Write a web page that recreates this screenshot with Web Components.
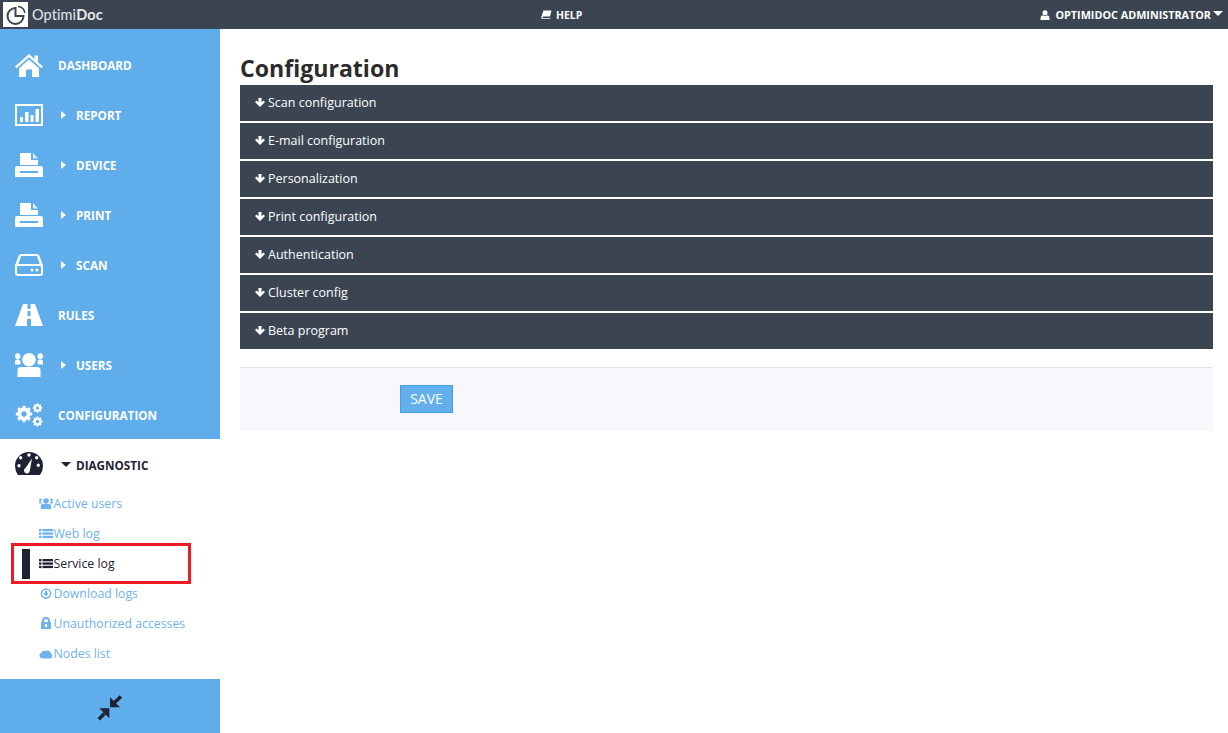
<!DOCTYPE html>
<html>
<head>
<meta charset="utf-8">
<title>OptimiDoc</title>
<style>
  html, body { margin: 0; height: 100%; background: #fff; overflow: hidden; }
  body { font-family: "Open Sans", "Noto Sans", sans-serif; }
</style>
</head>
<body>
<opti-app>
  <opti-topbar slot="top"></opti-topbar>
  <opti-sidebar slot="side">
    <nav-item icon="home" label="DASHBOARD"></nav-item>
    <nav-item icon="report" label="REPORT" arrow="right"></nav-item>
    <nav-item icon="print" label="DEVICE" arrow="right"></nav-item>
    <nav-item icon="print" label="PRINT" arrow="right"></nav-item>
    <nav-item icon="scan" label="SCAN" arrow="right"></nav-item>
    <nav-item icon="road" label="RULES"></nav-item>
    <nav-item icon="users" label="USERS" arrow="right"></nav-item>
    <nav-item icon="cogs" label="CONFIGURATION"></nav-item>
    <nav-item slot="open" icon="gauge" label="DIAGNOSTIC" arrow="down" active></nav-item>
    <sub-item slot="open" icon="group">Active users</sub-item>
    <sub-item slot="open" icon="list">Web log</sub-item>
    <sub-item slot="open" icon="list" current>Service log</sub-item>
    <sub-item slot="open" icon="download">Download logs</sub-item>
    <sub-item slot="open" icon="lock">Unauthorized accesses</sub-item>
    <sub-item slot="open" icon="cloud">Nodes list</sub-item>
  </opti-sidebar>
  <config-page slot="main" heading="Configuration">
    <config-row>Scan configuration</config-row>
    <config-row>E-mail configuration</config-row>
    <config-row>Personalization</config-row>
    <config-row>Print configuration</config-row>
    <config-row>Authentication</config-row>
    <config-row>Cluster config</config-row>
    <config-row>Beta program</config-row>
  </config-page>
</opti-app>

<script>
// shared icons, all on a 24 box unless the markup says otherwise
const gear = (cx, cy, r) => {
  let teeth = '';
  for (let a = 0; a < 180; a += 45) {
    teeth += `<rect x="${cx - r * 0.24}" y="${cy - r * 1.28}" width="${r * 0.48}" height="${r * 2.56}" rx="${r * 0.08}" transform="rotate(${a} ${cx} ${cy})"/>`;
  }
  // the hole is painted in the bar colour since the teeth sit under the ring
  return `<g>${teeth}<circle cx="${cx}" cy="${cy}" r="${r}"/><circle cx="${cx}" cy="${cy}" r="${r * 0.42}" fill="#5fadea"/></g>`;
};

const ICONS = {
  home: `<svg viewBox="0 0 28 24" width="28" height="24"><path d="M14 1 L19.5 6 V2.5 H23 V9.2 L28 13.6 L26.4 15.2 L14 4.3 L1.6 15.2 L0 13.6Z"/><path d="M14 6.4 L24 15.2 V24 H17 V16.5 H11 V24 H4 V15.2Z"/></svg>`,
  report: `<svg viewBox="0 0 28 22" width="28" height="22"><path fill-rule="evenodd" d="M0 0H28V22H0ZM2 2V20H26V2Z"/><rect x="5" y="13" width="3" height="5"/><rect x="10" y="8" width="3.500" height="10"/><rect x="15.500" y="11" width="3" height="7"/><rect x="20.500" y="5" width="3.500" height="13"/></svg>`,
  print: `<svg viewBox="0 0 28 24" width="28" height="24"><path d="M5 0H16V7H23V12H5Z"/><path d="M18 0 L23 5.5 H18Z" opacity=".8"/><path fill-rule="evenodd" d="M2 13H26Q28 13 28 15V24H0V15Q0 13 2 13ZM5 18V20H23V18Z"/></svg>`,
  scan: `<svg viewBox="0 0 28 22" width="28" height="22"><path fill-rule="evenodd" d="M6 0H22Q23.5 0 24.5 2L27.5 10Q28 11 28 13V19Q28 22 25 22H3Q0 22 0 19V13Q0 11 .5 10L3.5 2Q4.500 0 6 0ZM6 2 L3.4 10H24.600L22 2ZM3 12Q2 12 2 13V19Q2 20 3 20H25Q26 20 26 19V13Q26 12 25 12Z"/><circle cx="17" cy="16" r="1.500"/><circle cx="22" cy="16" r="1.500"/></svg>`,
  road: `<svg viewBox="0 0 28 22" width="28" height="22"><path fill-rule="evenodd" d="M8 0H12.500V5H15.500V0H20L28 22H16V15H12V22H0ZM12.500 7V12H15.500V7Z"/></svg>`,
  users: `<svg viewBox="0 0 28 24" width="28" height="24"><circle cx="14" cy="6.800" r="6.800"/><path d="M2.500 24V17Q2.500 14 6 14H22Q25.500 14 25.500 17V24Z"/><ellipse cx="2.700" cy="3.200" rx="2.700" ry="3"/><ellipse cx="25.300" cy="3.200" rx="2.700" ry="3"/><path d="M0 11.500V8Q0 6.500 2.700 6.500Q5.400 6.500 5.400 8V11.500Z"/><path d="M22.600 11.500V8Q22.600 6.500 25.300 6.500Q28 6.500 28 8V11.500Z"/></svg>`,
  cogs: `<svg viewBox="0 0 28 24" width="28" height="24">${gear(9, 11, 6.4)}${gear(22.500, 5, 3.700)}${gear(22.500, 18.500, 3.900)}</svg>`,
  gauge: `<svg viewBox="0 0 28 23" width="28" height="23"><path fill-rule="evenodd" d="M14 0A14 14 0 0 1 28 14Q28 19 25 23H3Q0 19 0 14A14 14 0 0 1 14 0ZM14 1.300A1.700 1.700 0 1 0 14 4.700A1.700 1.700 0 1 0 14 1.300ZM5.700 4A1.700 1.700 0 1 0 5.700 7.400A1.700 1.700 0 1 0 5.700 4ZM21.700 4A1.700 1.700 0 1 0 21.700 7.400A1.700 1.700 0 1 0 21.700 4ZM4 12A1.700 1.700 0 1 0 4 15.400A1.700 1.700 0 1 0 4 12ZM23.300 11.500A1.700 1.700 0 1 0 23.300 14.900A1.700 1.700 0 1 0 23.300 11.500ZM17 6.500 L10.500 16A2.900 2.900 0 1 0 14.800 18.500Z"/></svg>`,
  group: `<svg viewBox="0 0 14 11" width="14" height="11"><circle cx="7" cy="3" r="2.800"/><path d="M1.800 11V7.500Q1.800 6 3.500 6H10.500Q12.200 6 12.200 7.500V11Z"/><ellipse cx="1.400" cy="2" rx="1.400" ry="1.600"/><ellipse cx="12.600" cy="2" rx="1.400" ry="1.600"/><path d="M0 5.500V4.500Q0 3.800 1.400 3.800Q2.800 3.800 2.800 4.500V5.500Z"/><path d="M11.200 5.500V4.500Q11.200 3.800 12.600 3.800Q14 3.800 14 4.500V5.500Z"/></svg>`,
  list: `<svg viewBox="0 0 14 11" width="14" height="11"><rect y="1" width="2.500" height="2.300"/><rect y="4.400" width="2.500" height="2.300"/><rect y="7.800" width="2.500" height="2.300"/><rect x="3.500" y="1" width="10.500" height="2.300"/><rect x="3.500" y="4.400" width="10.500" height="2.300"/><rect x="3.500" y="7.800" width="10.500" height="2.300"/></svg>`,
  download: `<svg viewBox="0 0 14 11" width="14" height="11"><path fill-rule="evenodd" d="M7 .200A5.300 5.300 0 1 1 7 10.800A5.300 5.300 0 1 1 7 .200ZM7 1.700A3.800 3.800 0 1 0 7 9.300A3.800 3.800 0 1 0 7 1.700ZM5.900 2.800H8.100V5.300H9.800L7 8.300L4.200 5.300H5.900Z"/></svg>`,
  lock: `<svg viewBox="0 0 14 12" width="14" height="12"><path fill-rule="evenodd" d="M3 5V3.800A4 3.800 0 0 1 11 3.800V5H12V12H2V5ZM5 5H9V3.800A2 1.900 0 0 0 5 3.800ZM6 7V10H8V7Z"/></svg>`,
  cloud: `<svg viewBox="0 0 14 11" width="14" height="11"><path d="M3.200 10.500A3 3 0 0 1 2.400 4.700A3.200 3.200 0 0 1 6.500 3A3.600 3.600 0 0 1 12 5.600A2.600 2.600 0 0 1 11.200 10.500Z"/></svg>`
};

class OptiApp extends HTMLElement {
  constructor() {
    super();
    this.attachShadow({ mode: 'open' });
    this.shadowRoot.innerHTML = `
      <style>
        :host { display: grid; grid-template-columns: 220px 1fr; grid-template-rows: 29px 1fr; height: 733px; }
        .top { grid-column: 1 / 3; }
      </style>
      <div class="top"><slot name="top"></slot></div>
      <slot name="side"></slot>
      <slot name="main"></slot>
    `;
  }
}

class OptiTopbar extends HTMLElement {
  constructor() {
    super();
    this.attachShadow({ mode: 'open' });
    this.shadowRoot.innerHTML = `
      <style>
        :host { display: grid; grid-template-columns: 541px auto 1fr; align-items: center; height: 29px; background: #3b4552; color: #fff; }
        .logo { display: flex; align-items: center; height: 29px; padding-left: 3px; }
        .mark { width: 25px; height: 25px; background: #fff; display: flex; align-items: center; justify-content: center; margin-right: 4px; }
        .name { font-family: "Lato", sans-serif; font-size: 14.500px; letter-spacing: .1px; color: #e6e8ea; }
        .name b { font-weight: 700; }
        .help, .user { display: flex; align-items: center; font-size: 10.400px; font-weight: 700; }
        .help svg { margin-right: 4px; }
        .user { justify-content: flex-end; padding-right: 5px; font-size: 10.800px; }
        .user svg.me { margin-right: 5px; }
        .caret { width: 0; height: 0; border: 5px solid transparent; border-top-color: #fff; border-bottom: 0; margin: 0 0 2px 2px; }
      </style>
      <div class="logo">
        <span class="mark">
          <svg viewBox="0 0 20 20" width="20" height="20" fill="none" stroke="#3b4552" stroke-width="2"><path d="M9.500 3A8 8 0 1 0 17.500 11H9.500Z"/><path d="M12 1.500A7 7 0 0 1 18.800 8" stroke-width="1.600"/></svg>
        </span>
        <span class="name">Optimi<b>Doc</b></span>
      </div>
      <div class="help">
        <svg viewBox="0 0 11 9" width="11" height="9" fill="#fff"><path fill-rule="evenodd" d="M2.500 .500H10.500L9 6.500H2.500Q1.500 6.500 1.500 7.300T2.500 8H9.500V8.800H1.500Q.200 8.800 .200 7.300Z"/></svg>
        HELP
      </div>
      <div class="user">
        <svg class="me" viewBox="0 0 10 10" width="10" height="10" fill="#fff"><circle cx="5" cy="2.800" r="2.500"/><path d="M.500 10V8Q.500 5.500 3 5.300Q5 6.500 7 5.300Q9.500 5.500 9.500 8V10Z"/></svg>
        OPTIMIDOC ADMINISTRATOR
        <span class="caret"></span>
      </div>
    `;
  }
}

class OptiSidebar extends HTMLElement {
  constructor() {
    super();
    this.attachShadow({ mode: 'open' });
    this.shadowRoot.innerHTML = `
      <style>
        :host { display: flex; flex-direction: column; width: 220px; height: 704px; background: #fff; }
        .closed { background: #5fadea; padding-top: 11px; height: 399px; flex: none; }
        .open { flex: 1; padding-top: 1px; }
        .foot { flex: none; height: 54px; box-sizing: border-box; padding-top: 4px; background: #5fadea; display: flex; align-items: center; justify-content: center; }
      </style>
      <div class="closed"><slot></slot></div>
      <div class="open"><slot name="open"></slot></div>
      <div class="foot">
        <svg viewBox="0 0 26 26" width="26" height="26" fill="#1f2233" stroke="#1f2233">
          <path d="M13 2.300V12.300H23Z" stroke="none"/>
          <path d="M17.500 7.500L24 1.500" stroke-width="3.500" fill="none"/>
          <path d="M2.300 13.300H12.300V23.300Z" stroke="none"/>
          <path d="M7.500 18.500L1.800 24.200" stroke-width="3.500" fill="none"/>
        </svg>
      </div>
    `;
  }
}

class NavItem extends HTMLElement {
  constructor() {
    super();
    this.attachShadow({ mode: 'open' });
  }

  connectedCallback() {
    const icon = this.getAttribute('icon');
    const label = this.getAttribute('label') || '';
    const arrow = this.getAttribute('arrow');
    this.shadowRoot.innerHTML = `
      <style>
        :host { display: flex; align-items: center; height: 50px; padding-left: 15px; color: #fff; fill: #fff; font-size: 11.700px; font-weight: 700; }
        :host([active]) { color: #1f2233; fill: #1f2233; margin-bottom: -2px; }
        :host([active]) .icon { margin-top: -3px; }
        .icon { width: 28px; height: 24px; display: flex; align-items: center; justify-content: center; margin-right: 15px; }
        .arrow { width: 18px; display: flex; }
        .right { width: 0; height: 0; border: 4.500px solid transparent; border-left: 5px solid currentColor; border-right: 0; margin-left: 3px; }
        .down { width: 0; height: 0; border: 5px solid transparent; border-top: 5px solid currentColor; border-bottom: 0; margin: -2px 0 0 3px; }
      </style>
      <span class="icon">${ICONS[icon]}</span>
      ${arrow ? `<span class="arrow"><span class="${arrow}"></span></span>` : ''}
      <span>${label}</span>
    `;
  }
}

class SubItem extends HTMLElement {
  constructor() {
    super();
    this.attachShadow({ mode: 'open' });
  }

  connectedCallback() {
    this.shadowRoot.innerHTML = `
      <style>
        :host { display: flex; align-items: center; position: relative; height: 30px; padding-left: 39px; color: #6fb3ec; fill: #6fb3ec; font-size: 12.300px; }
        :host([current]) { color: #1f2233; fill: #1f2233; }
        svg { margin-right: .5px; display: block; }
        .bar { position: absolute; left: 22px; top: 1px; width: 8px; height: 30px; background: #1f2233; }
        .mark { position: absolute; left: 11px; top: -5px; width: 174px; height: 35px; border: 3px solid #ed1c24; }
      </style>
      ${this.hasAttribute('current') ? '<span class="bar"></span><span class="mark"></span>' : ''}
      ${ICONS[this.getAttribute('icon')]}
      <slot></slot>
    `;
  }
}

class ConfigPage extends HTMLElement {
  constructor() {
    super();
    this.attachShadow({ mode: 'open' });
  }

  connectedCallback() {
    this.shadowRoot.innerHTML = `
      <style>
        :host { display: block; padding: 0 15px 0 20px; color: #2b2b2b; }
        h1 { margin: 0; height: 56px; box-sizing: border-box; padding-top: 23px; font-size: 23.100px; line-height: 33px; font-weight: 700; }
        .rows { display: flex; flex-direction: column; gap: 2px; }
        .save { margin-top: 18px; height: 64px; box-sizing: border-box; border-top: 1px solid #e2e2e6; background: #f7f7fc; padding: 17px 0 0 160px; }
        button { display: block; width: 53px; height: 28px; padding: 0 0 2px; border: 1px solid #3f9fe8; background: #63afec; color: #fff; font: 14px "Open Sans", sans-serif; }
      </style>
      <h1>${this.getAttribute('heading')}</h1>
      <div class="rows"><slot></slot></div>
      <div class="save"><button type="button">SAVE</button></div>
    `;
  }
}

class ConfigRow extends HTMLElement {
  constructor() {
    super();
    this.attachShadow({ mode: 'open' });
    this.shadowRoot.innerHTML = `
      <style>
        :host { display: flex; align-items: center; height: 36px; box-sizing: border-box; padding: 0 0 2px 15px; background: #3b4552; color: #fff; font-size: 12.500px; }
        svg { margin-right: 3px; }
      </style>
      <svg viewBox="0 0 11 11" width="10" height="11" fill="#fff"><path d="M3.800 .500H7.200V5.200L9.300 3.200L11 4.900L5.500 10.500L0 4.900L1.700 3.200L3.800 5.200Z"/></svg>
      <slot></slot>
    `;
  }
}

customElements.define('opti-app', OptiApp);
customElements.define('opti-topbar', OptiTopbar);
customElements.define('opti-sidebar', OptiSidebar);
customElements.define('nav-item', NavItem);
customElements.define('sub-item', SubItem);
customElements.define('config-page', ConfigPage);
customElements.define('config-row', ConfigRow);
</script>
</body>
</html>
